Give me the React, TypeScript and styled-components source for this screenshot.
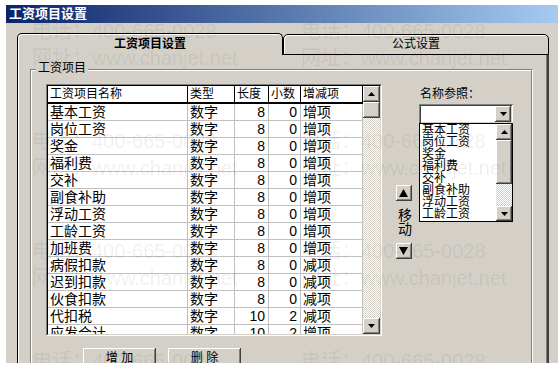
import styled, { createGlobalStyle, css } from 'styled-components';

const FONT = `"Liberation Sans", "Noto Sans CJK SC", sans-serif`;

const GlobalStyle = createGlobalStyle`
  html, body {
    margin: 0;
    padding: 0;
    background: #ffffff;
  }
  body {
    font-family: ${FONT};
    color: #000;
  }
`;

const raised = css`
  background: #d4d0c8;
  box-shadow: inset -1px -1px 0 #404040, inset 1px 1px 0 #ffffff,
    inset -2px -2px 0 #808080;
`;

const Window = styled.div`
  position: relative;
  margin: 5px 0 0 6px;
  width: 552px;
  height: 358px;
  overflow: hidden;
  background: #d4d0c8;
  font-family: ${FONT};
`;

const TitleBar = styled.div`
  height: 18px;
  padding-left: 3px;
  background: linear-gradient(to right, #0a246a, #a6caf0);
  color: #ffffff;
  font-size: 13px;
  font-weight: bold;
  line-height: 18px;
`;

const Body = styled.div`
  padding: 10px 0 0 11px;
`;

const TabStrip = styled.div`
  display: flex;
  width: 532px;
  height: 22px;
`;

const Tab = styled.div<{ $active?: boolean }>`
  flex: 1;
  box-sizing: border-box;
  margin-top: ${(p) => (p.$active ? 0 : 1)}px;
  border: 1px solid #000;
  border-bottom: ${(p) => (p.$active ? 'none' : '1px solid #000')};
  border-radius: 5px 5px 0 0;
  box-shadow: inset 1px 1px 0 #ffffff;
  font-size: 12px;
  font-weight: ${(p) => (p.$active ? 'bold' : 'normal')};
  line-height: ${(p) => (p.$active ? 21 : 19)}px;
  text-align: center;
`;

const Panel = styled.div`
  box-sizing: border-box;
  width: 532px;
  height: 330px;
  padding: 14px 15px 0 12px;
  border-left: 1px solid #000;
  border-right: 2px solid #404040;
  box-shadow: inset 1px 0 0 #ffffff, inset -1px 0 0 #808080;
`;

const Group = styled.div`
  position: relative;
  height: 320px;
  padding: 14px 0 0 15px;
  border: 1px solid #808080;
  box-shadow: inset 1px 1px 0 #ffffff, 1px 1px 0 #ffffff;
`;

const Legend = styled.span`
  position: absolute;
  top: -9px;
  left: 5px;
  padding: 0 2px;
  background: #d4d0c8;
  font-size: 12px;
  line-height: 14px;
`;

const GroupRow = styled.div`
  display: flex;
  align-items: flex-start;
`;

const GridBox = styled.div`
  display: flex;
  box-sizing: border-box;
  width: 336px;
  height: 252px;
  border: 1px solid;
  border-color: #808080 #ffffff #ffffff #808080;
`;

const GridInner = styled.div`
  display: flex;
  flex: 1;
  overflow: hidden;
  border: 1px solid;
  border-color: #000 #d4d0c8 #d4d0c8 #000;
  background: #ffffff;
`;

const Table = styled.div`
  width: 315px;
  overflow: hidden;
`;

const HeaderRow = styled.div`
  display: flex;
  box-sizing: border-box;
  height: 18px;
  border-bottom: 2px solid #000;
`;

const Row = styled.div`
  display: flex;
  box-sizing: border-box;
  height: 17px;
  border-bottom: 1px solid #c0c0c0;
`;

const Cell = styled.div<{ $w: number; $right?: boolean; $head?: boolean }>`
  box-sizing: border-box;
  flex: none;
  width: ${(p) => p.$w}px;
  padding: ${(p) => (p.$right ? '0 3px 0 0' : '0 0 0 2px')};
  border-right: 1px solid ${(p) => (p.$head ? '#000' : '#c0c0c0')};
  font-size: ${(p) => (p.$head ? 12 : 14)}px;
  line-height: 16px;
  text-align: ${(p) => (p.$right ? 'right' : 'left')};
  white-space: nowrap;
  overflow: hidden;
`;

const ScrollBar = styled.div<{ $w: number }>`
  display: flex;
  flex-direction: column;
  flex: none;
  width: ${(p) => p.$w}px;
`;

const ScrollButton = styled.div<{ $h: number }>`
  ${raised};
  display: flex;
  align-items: center;
  justify-content: center;
  flex: none;
  height: ${(p) => p.$h}px;
`;

const Track = styled.div`
  flex: 1;
  background-color: #ffffff;
  background-image: repeating-conic-gradient(#d4d0c8 0 25%, #ffffff 0 50%);
  background-size: 2px 2px;
`;

const MoveCol = styled.div`
  display: flex;
  flex-direction: column;
  align-items: center;
  width: 17px;
  margin-left: 13px;
  padding-top: 101px;
`;

const MoveButton = styled.div`
  ${raised};
  display: flex;
  align-items: center;
  justify-content: center;
  width: 16px;
  height: 16px;
`;

const MoveLabel = styled.div`
  margin: 7px 0;
  font-size: 14px;
  line-height: 14px;
  padding-left: 3px;
`;

const RightCol = styled.div`
  width: 94px;
  margin-left: 7px;
  padding-top: 3px;
`;

const FieldLabel = styled.div`
  padding-left: 1px;
  font-size: 12px;
  line-height: 14px;
`;

const Combo = styled.div`
  display: flex;
  justify-content: flex-end;
  box-sizing: border-box;
  height: 20px;
  margin-top: 3px;
  padding: 2px;
  background: #ffffff;
  box-shadow: inset 1px 1px 0 #808080, inset -1px -1px 0 #ffffff,
    inset 2px 2px 0 #404040, inset -2px -2px 0 #d4d0c8;
`;

const ComboButton = styled(ScrollButton)`
  width: 16px;
`;

const ListBox = styled.div`
  display: flex;
  box-sizing: border-box;
  height: 99px;
  margin-top: -1px;
  border: 1px solid #000;
  background: #ffffff;
`;

const ListItems = styled.div`
  flex: 1;
  padding-left: 2px;
  overflow: hidden;
`;

const ListItem = styled.div`
  font-size: 12px;
  line-height: 12px;
  white-space: nowrap;
`;

const ButtonRow = styled.div`
  display: flex;
  gap: 12px;
  margin-top: 12px;
  padding-left: 37px;
`;

const PushButton = styled.div`
  ${raised};
  box-sizing: border-box;
  width: 73px;
  height: 23px;
  padding-top: 3px;
  font-size: 12px;
  line-height: 14px;
  text-align: center;
  white-space: pre;
`;

const Watermark = styled.div`
  position: absolute;
  top: 13px;
  left: 26px;
  display: grid;
  grid-template-columns: repeat(3, 269px);
  grid-auto-rows: 110px;
  pointer-events: none;
  color: rgba(0, 0, 0, 0.07);
  font-size: 20px;
  line-height: 27px;
  white-space: nowrap;
`;

function Arrow({ dir, w, h }: { dir: 'up' | 'down'; w: number; h: number }) {
  const pts =
    dir === 'up' ? `0,${h} ${w / 2},0 ${w},${h}` : `0,0 ${w},0 ${w / 2},${h}`;
  return (
    <svg width={w} height={h} viewBox={`0 0 ${w} ${h}`}>
      <polygon points={pts} fill="#000" />
    </svg>
  );
}

const columns = [
  { title: '工资项目名称', w: 140 },
  { title: '类型', w: 47 },
  { title: '长度', w: 34, right: true },
  { title: '小数', w: 32, right: true },
  { title: '增减项', w: 62 },
];

const items: [string, string, number, number, string][] = [
  ['基本工资', '数字', 8, 0, '增项'],
  ['岗位工资', '数字', 8, 0, '增项'],
  ['奖金', '数字', 8, 0, '增项'],
  ['福利费', '数字', 8, 0, '增项'],
  ['交补', '数字', 8, 0, '增项'],
  ['副食补助', '数字', 8, 0, '增项'],
  ['浮动工资', '数字', 8, 0, '增项'],
  ['工龄工资', '数字', 8, 0, '增项'],
  ['加班费', '数字', 8, 0, '增项'],
  ['病假扣款', '数字', 8, 0, '减项'],
  ['迟到扣款', '数字', 8, 0, '减项'],
  ['伙食扣款', '数字', 8, 0, '减项'],
  ['代扣税', '数字', 10, 2, '减项'],
  ['应发合计', '数字', 10, 2, '增项'],
];

const refNames = ['基本工资', '岗位工资', '奖金', '福利费', '交补', '副食补助', '浮动工资', '工龄工资'];

export default function App() {
  return (
    <>
      <GlobalStyle />
      <Window>
        <TitleBar>工资项目设置</TitleBar>
        <Body>
          <TabStrip>
            <Tab $active>工资项目设置</Tab>
            <Tab>公式设置</Tab>
          </TabStrip>
          <Panel>
            <Group>
              <Legend>工资项目</Legend>
              <GroupRow>
                <GridBox>
                  <GridInner>
                    <Table>
                      <HeaderRow>
                        {columns.map((c) => (
                          <Cell key={c.title} $w={c.w} $head>
                            {c.title}
                          </Cell>
                        ))}
                      </HeaderRow>
                      {items.map((r) => (
                        <Row key={r[0]}>
                          {r.map((v, i) => (
                            <Cell key={i} $w={columns[i].w} $right={columns[i].right}>
                              {v}
                            </Cell>
                          ))}
                        </Row>
                      ))}
                    </Table>
                    <ScrollBar $w={17}>
                      <ScrollButton $h={16}>
                        <Arrow dir="up" w={7} h={4} />
                      </ScrollButton>
                      <ScrollButton $h={16} />
                      <Track />
                      <ScrollButton $h={16}>
                        <Arrow dir="down" w={7} h={4} />
                      </ScrollButton>
                    </ScrollBar>
                  </GridInner>
                </GridBox>
                <MoveCol>
                  <MoveButton>
                    <Arrow dir="up" w={9} h={8} />
                  </MoveButton>
                  <MoveLabel>
                    移<br />动
                  </MoveLabel>
                  <MoveButton>
                    <Arrow dir="down" w={9} h={8} />
                  </MoveButton>
                </MoveCol>
                <RightCol>
                  <FieldLabel>名称参照：</FieldLabel>
                  <Combo>
                    <ComboButton $h={16}>
                      <Arrow dir="down" w={7} h={4} />
                    </ComboButton>
                  </Combo>
                  <ListBox>
                    <ListItems>
                      {refNames.map((n) => (
                        <ListItem key={n}>{n}</ListItem>
                      ))}
                    </ListItems>
                    <ScrollBar $w={16}>
                      <ScrollButton $h={16}>
                        <Arrow dir="up" w={7} h={4} />
                      </ScrollButton>
                      <ScrollButton $h={44} />
                      <Track />
                      <ScrollButton $h={15}>
                        <Arrow dir="down" w={7} h={4} />
                      </ScrollButton>
                    </ScrollBar>
                  </ListBox>
                </RightCol>
              </GroupRow>
              <ButtonRow>
                <PushButton>增 加</PushButton>
                <PushButton>删 除</PushButton>
              </ButtonRow>
            </Group>
          </Panel>
        </Body>
        <Watermark>
          {Array.from({ length: 12 }).map((_, i) => (
            <div key={i}>
              电话：400-665-0028
              <br />
              网址：www.chanjet.net
            </div>
          ))}
        </Watermark>
      </Window>
    </>
  );
}
